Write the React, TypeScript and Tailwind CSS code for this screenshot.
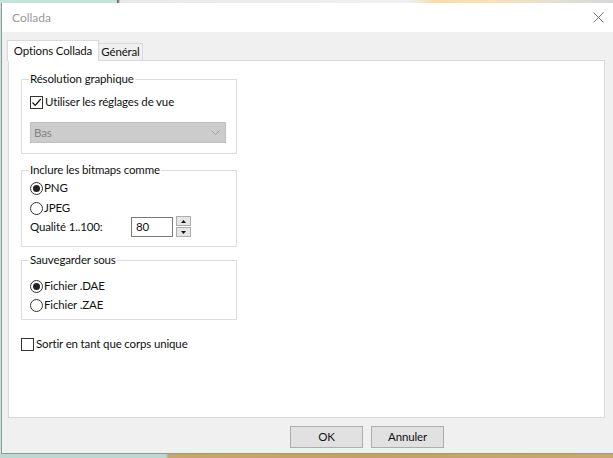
import React from 'react';

function CheckBox({ checked }: { checked: boolean }) {
  return (
    <span className="w-[13px] h-[13px] border border-[#333] bg-white flex items-center justify-center shrink-0">
      {checked && (
        <svg width="11" height="11" viewBox="0 0 11 11">
          <path d="M1.5 5.5 L4.2 8.3 L9.8 2" fill="none" stroke="#111" strokeWidth="1.2" />
        </svg>
      )}
    </span>
  );
}

function Radio({ checked }: { checked: boolean }) {
  return (
    <span className="w-[13px] h-[13px] rounded-full border border-[#333] bg-white flex items-center justify-center shrink-0">
      {checked && <span className="w-[7px] h-[7px] rounded-full bg-[#222]" />}
    </span>
  );
}

function Group({ title, className, children }: { title: string; className: string; children: React.ReactNode }) {
  return (
    <fieldset className={`w-[216px] border border-[#dcdcdc] pl-[8px] pr-[10px] ${className}`}>
      <legend className="-ml-[1px] px-[1px] leading-[16px]">{title}</legend>
      {children}
    </fieldset>
  );
}

export default function App() {
  return (
    <div className="w-[613px] h-[458px] flex flex-col overflow-hidden text-[11.5px] tracking-[-0.15px] text-[#111] font-['Lato',sans-serif]">
      {/* desktop behind the dialog */}
      <div className="h-[3px] bg-[linear-gradient(90deg,#c6e2dd_0%,#c6e2dd_19%,#5a5a5a_19.2%,#e9e9e9_19.6%,#efefef_67%,#f5dcaa_71%,#f6e2bb_80%,#e6e0d2_90%,#d8d8d8_100%)]" />

      <div className="flex-1 flex bg-[#c6e2dd] pl-[1px]">
        <div className="flex-1 flex flex-col border-l border-[#8e9b9a]">
          {/* title bar */}
          <div className="h-[29px] bg-white flex items-center justify-between pl-[10px] pr-[9px]">
            <span className="text-[12px] tracking-normal text-[#9a9a9a]">Collada</span>
            <svg width="11" height="11" viewBox="0 0 11 11">
              <path d="M0.5 0.5 L10.5 10.5 M10.5 0.5 L0.5 10.5" stroke="#707070" strokeWidth="1" />
            </svg>
          </div>

          <div className="flex-1 bg-[#f0f0f0] flex flex-col pt-[8px] border-b border-[#8e9b9a]">
            {/* tabs */}
            <div className="flex items-end h-[20px] pl-[5px]">
              <div className="relative z-10 h-[21px] -mb-[1px] w-[92px] bg-white border border-b-0 border-[#d9d9d9] flex items-center justify-center">
                Options Collada
              </div>
              <div className="h-[17px] w-[44px] bg-[#f0f0f0] border border-l-0 border-b-0 border-[#d9d9d9] flex items-center justify-center">
                Général
              </div>
            </div>

            {/* tab page */}
            <div className="ml-[6px] w-[597px] h-[358px] bg-white border border-[#d9d9d9] pl-[12px] pt-[10px] flex flex-col">
              <Group title="Résolution graphique" className="pb-[10px]">
                <label className="mt-[7px] h-[16px] flex items-center gap-[2px]">
                  <CheckBox checked />
                  <span>Utiliser les réglages de vue</span>
                </label>
                <div className="mt-[12px] w-[196px] h-[21px] bg-[#cccccc] border border-[#bfbfbf] flex items-center justify-between pl-[3px] pr-[5px] text-[#838383]">
                  <span>Bas</span>
                  <svg width="9" height="5" viewBox="0 0 9 5">
                    <path d="M0.5 0.5 L4.5 4.5 L8.5 0.5" fill="none" stroke="#a2a2a2" strokeWidth="1" />
                  </svg>
                </div>
              </Group>

              <Group title="Inclure les bitmaps comme" className="mt-[8px] pb-[9px]">
                <label className="mt-[2px] h-[16px] flex items-center gap-[1px]">
                  <Radio checked />
                  <span>PNG</span>
                </label>
                <label className="mt-[4px] h-[16px] flex items-center gap-[1px]">
                  <Radio checked={false} />
                  <span>JPEG</span>
                </label>
                <div className="h-[21px] flex items-center">
                  <span className="w-[101px]">Qualité 1..100:</span>
                  <div className="w-[42px] h-[20px] border border-[#7a7a7a] bg-white flex items-center pl-[4px]">80</div>
                  <div className="ml-[3px] h-[21px] flex flex-col gap-[1px]">
                    <button className="w-[15px] h-[10px] bg-[#e5e5e5] border border-[#adadad] flex items-center justify-center">
                      <svg width="5" height="3" viewBox="0 0 5 3"><path d="M0 3 L2.5 0 L5 3 Z" fill="#111" /></svg>
                    </button>
                    <button className="w-[15px] h-[10px] bg-[#e5e5e5] border border-[#adadad] flex items-center justify-center">
                      <svg width="5" height="3" viewBox="0 0 5 3"><path d="M0 0 L2.5 3 L5 0 Z" fill="#111" /></svg>
                    </button>
                  </div>
                </div>
              </Group>

              <Group title="Sauvegarder sous" className="mt-[5px] pb-[6px]">
                <label className="mt-[10px] h-[16px] flex items-center gap-[1px]">
                  <Radio checked />
                  <span>Fichier .DAE</span>
                </label>
                <label className="mt-[3px] h-[16px] flex items-center gap-[1px]">
                  <Radio checked={false} />
                  <span>Fichier .ZAE</span>
                </label>
              </Group>

              <label className="mt-[16px] h-[16px] flex items-center gap-[2px]">
                <CheckBox checked={false} />
                <span>Sortir en tant que corps unique</span>
              </label>
            </div>

            {/* buttons */}
            <div className="mt-[8px] pl-[288px] flex gap-[8px]">
              <button className="w-[73px] h-[22px] bg-[#e1e1e1] border border-[#adadad]">OK</button>
              <button className="w-[73px] h-[22px] bg-[#e1e1e1] border border-[#adadad]">Annuler</button>
            </div>
          </div>
        </div>
      </div>

      <div className="h-[4px] bg-[linear-gradient(90deg,#bcd8d2_0%,#bcd8d2_27%,#c9a66d_27.5%,#c4a068_60%,#caa873_100%)]" />
    </div>
  );
}
